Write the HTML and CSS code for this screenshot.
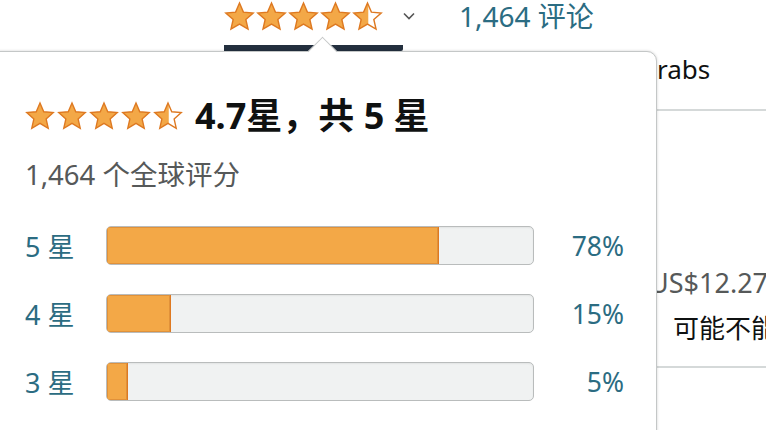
FILE: index.html
```html
<!DOCTYPE html>
<html lang="zh">
<head>
<meta charset="utf-8">
<link rel="stylesheet" href="styles.css">
</head>
<body>
<svg width="0" height="0" class="defs" aria-hidden="true">
  <defs>
    <polygon id="star-shape" points="12,1.6 15,8.6 22.6,9.3 16.9,14.3 18.6,21.8 12,17.9 5.4,21.8 7.1,14.3 1.4,9.3 9,8.6"/>
    <clipPath id="left-half"><rect x="0" y="0" width="12.6" height="24"/></clipPath>
  </defs>
</svg>
<div class="page">
  <header class="top">
    <div class="tab">
      <div class="stars stars-top">
        <svg viewBox="0 0 24 24"><use href="#star-shape" class="s-full"/></svg>
        <svg viewBox="0 0 24 24"><use href="#star-shape" class="s-full"/></svg>
        <svg viewBox="0 0 24 24"><use href="#star-shape" class="s-full"/></svg>
        <svg viewBox="0 0 24 24"><use href="#star-shape" class="s-full"/></svg>
        <svg viewBox="0 0 24 24"><use href="#star-shape" class="s-empty"/><use href="#star-shape" class="s-half" clip-path="url(#left-half)"/><use href="#star-shape" class="s-line"/></svg>
      </div>
      <div class="tab-bar"></div>
    </div>
    <svg class="chev" viewBox="0 0 12 8"><polyline points="1,1.5 6,6.5 11,1.5"/></svg>
    <a class="review-link">1,464 评论</a>
  </header>

  <main class="bg">
    <div class="bg-left"></div>
    <div class="bg-right">
      <div class="bg-title">rabs</div>
      <div class="bg-item">
        <div class="price">US$12.27</div>
        <div class="note">可能不能</div>
      </div>
    </div>
  </main>

  <section class="popover">
    <div class="arrow"></div>
    <div class="pop-head">
      <div class="stars stars-pop">
        <svg viewBox="0 0 24 24"><use href="#star-shape" class="s-full"/></svg>
        <svg viewBox="0 0 24 24"><use href="#star-shape" class="s-full"/></svg>
        <svg viewBox="0 0 24 24"><use href="#star-shape" class="s-full"/></svg>
        <svg viewBox="0 0 24 24"><use href="#star-shape" class="s-full"/></svg>
        <svg viewBox="0 0 24 24"><use href="#star-shape" class="s-empty"/><use href="#star-shape" class="s-half" clip-path="url(#left-half)"/><use href="#star-shape" class="s-line"/></svg>
      </div>
      <h2 class="pop-title">4.7星，共 5 星</h2>
    </div>
    <div class="pop-sub">1,464 个全球评分</div>
    <div class="hist">
      <div class="h-row">
        <span class="h-label">5 星</span>
        <div class="h-bar"><div class="h-fill" style="width:78%"></div></div>
        <span class="h-pct">78%</span>
      </div>
      <div class="h-row">
        <span class="h-label">4 星</span>
        <div class="h-bar"><div class="h-fill" style="width:15%"></div></div>
        <span class="h-pct">15%</span>
      </div>
      <div class="h-row">
        <span class="h-label">3 星</span>
        <div class="h-bar"><div class="h-fill" style="width:5%"></div></div>
        <span class="h-pct">5%</span>
      </div>
      <div class="h-row">
        <span class="h-label">2 星</span>
        <div class="h-bar"><div class="h-fill" style="width:1%"></div></div>
        <span class="h-pct">1%</span>
      </div>
    </div>
  </section>
</div>
</body>
</html>
```

FILE: styles.css
```css
* { box-sizing: border-box; }
html, body { margin: 0; padding: 0; background: #fff; }
body {
  font-family: "Noto Sans", "Noto Sans CJK SC", sans-serif;
  color: #0f1111;
  width: 766px;
  height: 430px;
  overflow: hidden;
}
.defs { position: absolute; }
.page { position: relative; width: 766px; height: 430px; overflow: hidden; }

.s-full { fill: #f3a847; stroke: #de7921; stroke-width: 1.1; }
.s-empty { fill: #fff; }
.s-half { fill: #f3a847; }
.s-line { fill: none; stroke: #de7921; stroke-width: 1.1; }

.top {
  display: flex;
  align-items: flex-start;
  height: 51px;
  padding-left: 224px;
}
.tab { width: 179px; display: flex; flex-direction: column; }
.stars { display: flex; }
.stars-top { padding-top: 1px; gap: 1px; }
.stars-top svg { width: 31px; height: 31px; }
.tab-bar { margin-top: 13px; height: 6px; background: #232f3e; border-radius: 0 0 2px 0; }
.chev { width: 12px; height: 8px; margin-left: 0; margin-top: 12px; }
.chev polyline { fill: none; stroke: #555; stroke-width: 1.6; }
.review-link {
  margin-left: 44px;
  font-size: 28px;
  line-height: 33px;
  color: #2b6c82;
}

.bg { display: grid; grid-template-columns: 657px 1fr; height: 379px; }
.bg-right { display: flex; flex-direction: column; }
.bg-title {
  height: 60px;
  font-size: 26px;
  line-height: 36px;
  border-bottom: 2px solid #d5d9d9;
}
.bg-item {
  height: 257px;
  border-bottom: 2px solid #d5d9d9;
  padding-top: 153px;
  white-space: nowrap;
}
.price { font-size: 27px; line-height: 38px; color: #565959; margin-left: -8px; }
.note { font-size: 26px; line-height: 36px; color: #0f1111; margin-left: 16px; margin-top: 8px; }

.popover {
  position: absolute;
  top: 51px;
  left: -10px;
  width: 667px;
  height: 440px;
  background: #fff;
  border: 1px solid #c4c7c7;
  border-radius: 10px;
  box-shadow: 0 0 3px rgba(0,0,0,0.18);
  padding: 47px 0 0 34px;
}
.arrow {
  position: absolute;
  top: -11px;
  left: 321px;
  width: 21px;
  height: 21px;
  background: #fff;
  border-top: 1px solid #c4c7c7;
  border-left: 1px solid #c4c7c7;
  transform: rotate(45deg);
}
.pop-head { display: flex; align-items: center; gap: 12px; height: 34px; }
.stars-pop { gap: 2px; }
.stars-pop svg { width: 30px; height: 30px; }
.pop-title {
  margin: 0;
  font-size: 36px;
  line-height: 40px;
  font-weight: 700;
  color: #0f1111;
}
.pop-sub {
  margin-top: 23px;
  font-size: 27.5px;
  line-height: 38px;
  color: #565959;
}
.hist { margin-top: 32px; display: flex; flex-direction: column; gap: 29px; }
.h-row {
  display: grid;
  grid-template-columns: 81px 428px 90px;
  align-items: center;
  height: 39px;
}
.h-label { font-size: 27px; color: #2b6c82; }
.h-pct { font-size: 26.5px; color: #2b6c82; text-align: right; }
.h-bar {
  height: 39px;
  background: #f0f2f2;
  border: 1px solid #b9bcbc;
  border-radius: 5px;
  overflow: hidden;
  box-shadow: inset 0 1px 2px rgba(0,0,0,0.06);
}
.h-fill {
  height: 100%;
  background: #f3a847;
  border-right: 1px solid #de7921;
  box-shadow: inset 0 0 0 1px #e0913a;
}
```
